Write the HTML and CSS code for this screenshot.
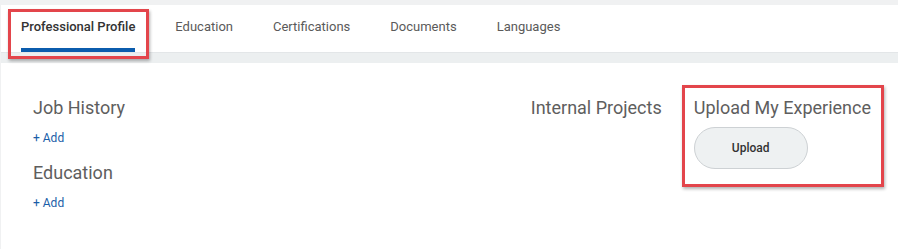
FILE: index.html
```html
<!DOCTYPE html>
<html>
<head>
	<meta charset=utf-8>
	<title>Profile</title>
	<link rel="stylesheet" href="styles.css">
</head>
<body>
<div class=page>
	<nav class=tabs>
		<a class="tab active">Professional Profile</a>
		<a class=tab>Education</a>
		<a class=tab>Certifications</a>
		<a class=tab>Documents</a>
		<a class=tab>Languages</a>
	</nav>
	<div class=band></div>
	<main class=content>
		<section class=left>
			<h2>Job History</h2>
			<a class=add>+ Add</a>
			<h2>Education</h2>
			<a class=add>+ Add</a>
		</section>
		<section class=projects>
			<h2>Internal Projects</h2>
		</section>
		<section class=upload>
			<h2>Upload My Experience</h2>
			<button class=pill>Upload</button>
		</section>
	</main>
	<div class="mark mark-tab"></div>
	<div class="mark mark-upload"></div>
</div>
</body>
</html>
```

FILE: styles.css
```css
* {
	margin: 0;
	padding: 0;
	box-sizing: border-box;
}
body {
	background: #f0f1f2;
	font-family: Roboto, "Liberation Sans", sans-serif;
	color: #5c5c5c;
}
.page {
	position: relative;
	height: 249px;
	margin-top: 5px;
	margin-left: 1px;
	background: white;
}
.tabs {
	display: flex;
	height: 48px;
	border-bottom: 1px solid #e3e6e8;
}
.tab {
	padding: 14px 20px 0;
	font-size: 13px;
	color: #5a5a5a;
	position: relative;
}
.tab.active {
	color: #333;
	font-weight: 500;
}
.tab.active::after {
	content: '';
	position: absolute;
	left: 20px;
	right: 20px;
	bottom: 0;
	height: 4px;
	background: #0b5cad;
}
.band {
	height: 10px;
	background: #eceff0;
}
.content {
	display: flex;
	padding: 34px 27px 0 32px;
}
.content h2 {
	font-size: 18px;
	font-weight: 400;
	color: #5e5e5e;
	line-height: 21px;
}
.left {
	flex: 1;
}
.add {
	display: block;
	font-size: 12px;
	color: #1a5ea8;
	margin: 13px 0 17px;
}
.projects {
	margin-right: 32px;
}
.pill {
	margin-top: 9px;
	width: 114px;
	height: 42px;
	border: 1px solid #cdd1d4;
	border-radius: 21px;
	background: #eef1f2;
	font-family: Roboto, sans-serif;
	font-size: 12px;
	font-weight: 500;
	color: #333;
}
.mark {
	position: absolute;
	border: 3px solid #e3454b;
	box-shadow: 1px 2px 3px rgba(0,0,0,.3);
}
.mark-tab {
	left: 7px;
	top: 4px;
	width: 141px;
	height: 50px;
}
.mark-upload {
	left: 681px;
	top: 80px;
	width: 202px;
	height: 102px;
}
```
